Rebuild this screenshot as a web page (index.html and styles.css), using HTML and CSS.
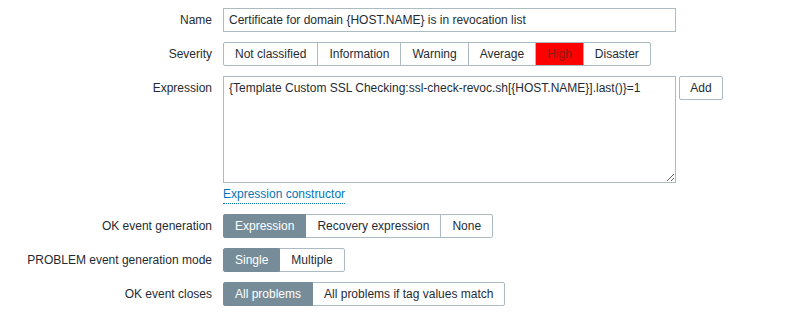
FILE: index.html
```html
<!DOCTYPE html>
<html lang="en">
<head>
    <meta charset="UTF-8">
    <title>Trigger</title>
    <link rel="stylesheet" href="styles.css">
</head>
<body>
    <form class="form-grid">
        <label class="form-label">Name</label>
        <div class="form-field">
            <input class="text-input" type="text" value="Certificate for domain {HOST.NAME} is in revocation list">
        </div>

        <label class="form-label">Severity</label>
        <div class="form-field">
            <div class="segments">
                <span class="seg">Not classified</span>
                <span class="seg">Information</span>
                <span class="seg">Warning</span>
                <span class="seg">Average</span>
                <span class="seg seg-high">High</span>
                <span class="seg">Disaster</span>
            </div>
        </div>

        <label class="form-label">Expression</label>
        <div class="form-field">
            <div class="expr-row">
                <textarea class="expr-text">{Template Custom SSL Checking:ssl-check-revoc.sh[{HOST.NAME}].last()}=1</textarea>
                <button type="button" class="btn">Add</button>
            </div>
            <a class="link" href="#">Expression constructor</a>
        </div>

        <label class="form-label">OK event generation</label>
        <div class="form-field">
            <div class="segments">
                <span class="seg seg-on">Expression</span>
                <span class="seg">Recovery expression</span>
                <span class="seg">None</span>
            </div>
        </div>

        <label class="form-label">PROBLEM event generation mode</label>
        <div class="form-field">
            <div class="segments">
                <span class="seg seg-on">Single</span>
                <span class="seg">Multiple</span>
            </div>
        </div>

        <label class="form-label">OK event closes</label>
        <div class="form-field">
            <div class="segments">
                <span class="seg seg-on">All problems</span>
                <span class="seg">All problems if tag values match</span>
            </div>
        </div>
    </form>
</body>
</html>
```

FILE: styles.css
```css
body {
    font-family: 'Liberation Sans', Arial, sans-serif;
    font-size: 12px;
    color: #1f2c33;
    background-color: #fff;
    margin: 0;
    padding: 8px 0 0 0;
}

/* Grade do formulario */
.form-grid {
    display: grid;
    grid-template-columns: 212px 1fr;
    column-gap: 11px;
    row-gap: 10px;
}

.form-label {
    text-align: right;
    line-height: 24px;
    color: #1f2c33;
}

.form-field {
    display: flex;
    flex-direction: column;
    align-items: flex-start;
}

.text-input {
    box-sizing: border-box;
    width: 453px;
    height: 24px;
    border: 1px solid #acbbc2;
    padding: 0 5px;
    font-family: inherit;
    font-size: 12px;
    color: #1f2c33;
    outline: none;
}

/* Botoes segmentados */
.segments {
    display: flex;
}

.seg {
    box-sizing: border-box;
    height: 24px;
    line-height: 22px;
    padding: 0 11px;
    border: 1px solid #acbbc2;
    margin-left: -1px;
    background-color: #fff;
    white-space: nowrap;
}

.seg:first-child {
    margin-left: 0;
    border-radius: 2px 0 0 2px;
}

.seg:last-child {
    border-radius: 0 2px 2px 0;
}

.seg-on {
    background-color: #768d99;
    border-color: #768d99;
    color: #fff;
    position: relative;
}

.seg-high {
    background-color: #ff0000;
    color: #8c1a1a;
}

/* Expressao */
.expr-row {
    display: flex;
    align-items: flex-start;
    gap: 3px;
}

.expr-text {
    box-sizing: border-box;
    width: 453px;
    height: 107px;
    border: 1px solid #acbbc2;
    padding: 4px 5px;
    margin: 0;
    font-family: inherit;
    font-size: 12px;
    line-height: 14px;
    color: #1f2c33;
    outline: none;
}

.btn {
    box-sizing: border-box;
    height: 24px;
    width: 44px;
    padding: 0;
    border: 1px solid #acbbc2;
    border-radius: 2px;
    background-color: #fff;
    font-family: inherit;
    font-size: 12px;
    color: #1f2c33;
}

.link {
    margin-top: 3px;
    line-height: 17px;
    color: #0275b8;
    text-decoration: none;
    border-bottom: 1px dotted #0275b8;
}
```
